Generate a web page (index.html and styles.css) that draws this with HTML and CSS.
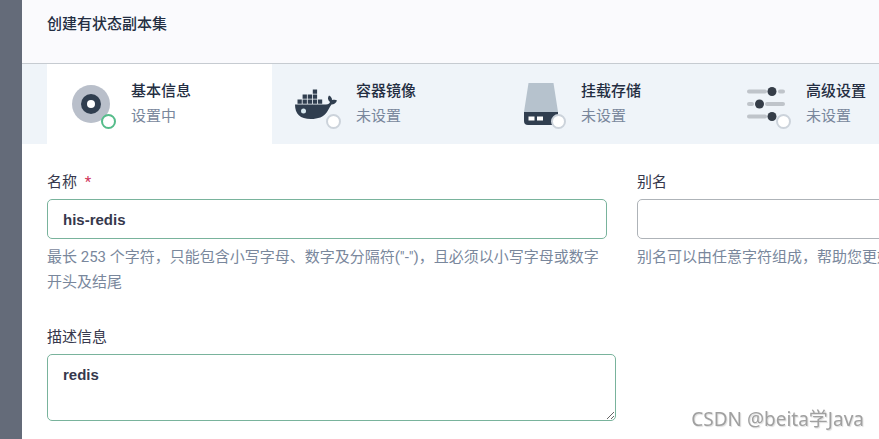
FILE: index.html
```
<!DOCTYPE html>
<html lang="zh-CN">
<head>
  <meta charset="UTF-8">
  <meta name="viewport" content="width=device-width, initial-scale=1.0">
  <title>创建有状态副本集</title>
  <link rel="stylesheet" href="styles.css">
</head>
<body>
  <div class="modal">
    <header class="modal-header">
      <h1>创建有状态副本集</h1>
    </header>

    <nav class="steps">
      <button type="button" class="step active">
        <span class="step-icon">
          <svg width="40" height="40" viewBox="0 0 40 40">
            <circle cx="19" cy="20" r="19" fill="#b9bfca"/>
            <circle cx="19" cy="20" r="10" fill="#303e4f"/>
            <circle cx="19" cy="20" r="4" fill="#fff"/>
          </svg>
          <span class="dot"></span>
        </span>
        <span class="step-text">
          <strong>基本信息</strong>
          <span>设置中</span>
        </span>
      </button>

      <button type="button" class="step">
        <span class="step-icon">
          <svg width="40" height="40" viewBox="0 0 40 40">
            <path fill="#303e4f" d="M-2 20.500H29C31.500 20.500 32.500 19.500 33 18C30.500 16 30.500 13.500 32 11.500C34 12.500 35 14 35 16C37 15.500 39 15.500 40 16.500C39 19 37 20.500 34.500 20.500C33 22 32 25 30 28C26.500 33 21 35 14 35C3 35-2 30-2 20.500Z"/>
            <path fill="#303e4f" d="M.500 15.500h4.300v4.300h-4.300zM5.600 15.500h4.300v4.300h-4.300zM10.700 15.500h4.300v4.300h-4.300zM15.800 15.500h4.300v4.300h-4.300zM20.900 15.500h4.300v4.300h-4.300z"/>
            <path fill="#303e4f" d="M5.600 10.500h4.300v4.300h-4.300zM10.700 10.500h4.300v4.300h-4.300zM15.800 10.500h4.300v4.300h-4.300zM15.800 5.500h4.300v4.300h-4.300z"/>
            <circle cx="6.500" cy="27" r="2.500" fill="#d8e9f0"/>
          </svg>
          <span class="dot"></span>
        </span>
        <span class="step-text">
          <strong>容器镜像</strong>
          <span>未设置</span>
        </span>
      </button>

      <button type="button" class="step">
        <span class="step-icon">
          <svg width="40" height="40" viewBox="0 0 40 40">
            <path d="M6.500 -1H31.500L36 28H2Z" fill="#b6c2cd"/>
            <path d="M2 28H36V37Q36 41 32 41H6Q2 41 2 37Z" fill="#303e4f"/>
            <path d="M6.500 32.500h6v4h-6zM15 32.500h6v4h-6z" fill="#fff"/>
          </svg>
          <span class="dot"></span>
        </span>
        <span class="step-text">
          <strong>挂载存储</strong>
          <span>未设置</span>
        </span>
      </button>

      <button type="button" class="step">
        <span class="step-icon">
          <svg width="40" height="40" viewBox="0 0 40 40">
            <g stroke="#bfc4ca" stroke-width="4" stroke-linecap="round">
              <path d="M2 7.500H18M33 7.500H36M2 20H5M20 20H36M2 32.500H18"/>
            </g>
            <g fill="#353d48">
              <circle cx="25" cy="7.500" r="4.500"/>
              <circle cx="12.500" cy="20" r="4.500"/>
              <circle cx="25" cy="32.500" r="4.500"/>
            </g>
          </svg>
          <span class="dot"></span>
        </span>
        <span class="step-text">
          <strong>高级设置</strong>
          <span>未设置</span>
        </span>
      </button>
    </nav>

    <form class="form">
      <div class="field">
        <label for="name">名称 <span class="required">*</span></label>
        <input class="valid" type="text" id="name" value="his-redis">
        <p>最长 253 个字符，只能包含小写字母、数字及分隔符("-")，且必须以小写字母或数字开头及结尾</p>
      </div>
      <div class="field">
        <label for="alias">别名</label>
        <input type="text" id="alias">
        <p>别名可以由任意字符组成，帮助您更好的区分资源</p>
      </div>
      <div class="field">
        <label for="description">描述信息</label>
        <textarea class="valid" id="description">redis</textarea>
      </div>
    </form>
  </div>

  <div class="watermark">CSDN @beita学Java</div>
</body>
</html>
```

FILE: styles.css
```
* {
  box-sizing: border-box;
}

body {
  font-family: Roboto, "Noto Sans CJK SC", sans-serif;
  font-size: 15px;
  color: #36384c;
  background-color: #646b79;
  margin: 0;
  padding-left: 22px;
  overflow: hidden;
}

.modal {
  min-height: 100vh;
  background-color: #fff;
  overflow: hidden;
}

.modal-header {
  height: 64px;
  padding: 12px 25px;
  background-color: #fafafd;
  border-bottom: 1px solid #c6cbd1;
}

h1 {
  margin: 0;
  font-size: 15px;
  line-height: 24px;
  font-weight: 500;
  color: #242e42;
}

.steps {
  display: flex;
  padding-left: 25px;
  background-color: #eff4f9;
}

.step {
  display: flex;
  flex: 0 0 225px;
  align-items: center;
  gap: 19px;
  height: 80px;
  padding: 0 25px;
  border: none;
  background-color: transparent;
  font-family: inherit;
  font-size: 15px;
  line-height: 25px;
  text-align: left;
  color: #79879c;
  cursor: pointer;
}

.step.active {
  background-color: #fff;
}

.step-icon {
  position: relative;
  width: 40px;
  height: 40px;
}

.step-icon svg {
  display: block;
  overflow: visible;
}

.dot {
  position: absolute;
  right: -4px;
  bottom: -5px;
  width: 15px;
  height: 15px;
  border: 2px solid #ccd3db;
  border-radius: 50%;
  background-color: #fff;
}

.active .dot {
  border-color: #55bc8a;
}

.step-text strong,
.step-text span {
  display: block;
}

.step-text strong {
  font-weight: 500;
  color: #242e42;
}

.form {
  display: grid;
  grid-template-columns: repeat(2, minmax(560px, 1fr));
  gap: 32px 30px;
  padding: 28px 25px;
}

label {
  display: block;
  margin-bottom: 7px;
  line-height: 20px;
}

.required {
  margin-left: 4px;
  color: #d0365a;
}

input,
textarea {
  display: block;
  width: 100%;
  border: 1px solid #aeb3b8;
  border-radius: 5px;
  background-color: #fff;
  font-family: "Liberation Sans", "Noto Sans CJK SC", sans-serif;
  font-size: 15px;
  font-weight: bold;
  color: #36384c;
}

input {
  height: 40px;
  padding: 0 15px;
}

textarea {
  width: 569px;
  height: 67px;
  padding: 8px 15px;
  line-height: 24px;
}

.valid {
  border-color: #79b39c;
}

.field p {
  margin: 6px 0 0;
  line-height: 25px;
  color: #79879c;
}

.watermark {
  position: fixed;
  right: 15px;
  bottom: 6px;
  font-family: "Noto Sans", "Noto Sans CJK SC", sans-serif;
  font-size: 19px;
  line-height: 28px;
  color: #a0a0a0;
  text-shadow: 1px 1px 1px #ddd;
}
```
